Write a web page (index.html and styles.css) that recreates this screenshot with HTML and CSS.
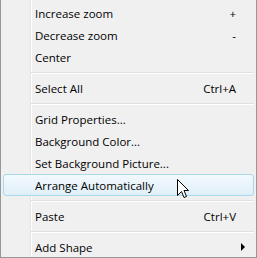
FILE: index.html
```html
<!DOCTYPE html>
<html>
    <head>
        <meta charset="utf-8">
        <title>Context menu</title>
        <link rel="stylesheet" href="styles.css">
    </head>
    <body>
        <div class="menu">
            <div class="item"><span class="label">Increase zoom</span><span class="key">+</span></div>
            <div class="item"><span class="label">Decrease zoom</span><span class="key">-</span></div>
            <div class="item"><span class="label">Center</span></div>
            <div class="sep"></div>
            <div class="item"><span class="label">Select All</span><span class="key">Ctrl+A</span></div>
            <div class="sep"></div>
            <div class="item"><span class="label">Grid Properties...</span></div>
            <div class="item"><span class="label">Background Color...</span></div>
            <div class="item"><span class="label">Set Background Picture...</span></div>
            <div class="item hover"><span class="label">Arrange Automatically</span>
                <svg class="cursor" width="12" height="20" viewBox="0 0 12 20">
                    <path d="M0.5 0.5 L0.5 16.5 L4.5 12.5 L7 18.5 L9.5 17.5 L7 11.5 L11.5 11.5 Z" fill="#fff" stroke="#000" stroke-width="1"/>
                </svg>
            </div>
            <div class="sep"></div>
            <div class="item"><span class="label">Paste</span><span class="key">Ctrl+V</span></div>
            <div class="sep"></div>
            <div class="item"><span class="label">Add Shape</span><span class="arrow"></span></div>
        </div>
    </body>
</html>
```

FILE: styles.css
```css
html, body{
    margin: 0;
    padding: 0;
    background-color: #f0f0f0;
}
.menu{
    width: 251px;
    height: 253px;
    padding: 2px;
    border: 1px solid #979797;
    border-top: none;
    background: linear-gradient(to right, #f0f0f0 29px, #e2e3e3 29px, #e2e3e3 30px, #fff 30px, #fff 31px, #f0f0f0 31px);
    font-family: "Open Sans", sans-serif;
    font-size: 11.5px;
    color: #000;
    overflow: hidden;
}
.item{
    display: flex;
    align-items: center;
    height: 22px;
    padding-left: 32px;
    padding-right: 18px;
    position: relative;
}
.label{
    flex: 1;
}
.key{
    text-align: right;
}
.hover{
    height: 20px;
    border: 1px solid #a8d8eb;
    border-radius: 3px;
    padding-left: 31px;
    padding-right: 17px;
    background: linear-gradient(#f2f9fd, #e0eff8);
}
.cursor{
    position: absolute;
    left: 173px;
    top: 4px;
}
.arrow{
    width: 0;
    height: 0;
    border-top: 4px solid transparent;
    border-bottom: 4px solid transparent;
    border-left: 4px solid #000;
    margin-right: -9px;
}
.sep{
    height: 9px;
    margin-left: 28px;
    display: flex;
    flex-direction: column;
    justify-content: center;
}
.sep::before{
    content: "";
    height: 1px;
    background-color: #e0e0e0;
    border-bottom: 1px solid #fff;
}
```
